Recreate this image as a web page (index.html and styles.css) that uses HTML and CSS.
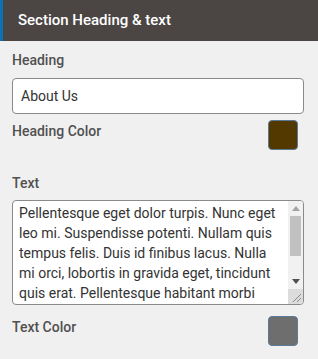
FILE: index.html
```html
<!DOCTYPE html>
<html lang="en">
<head>
  <meta charset="UTF-8" />
  <meta name="viewport" content="width=device-width, initial-scale=1.0" />
  <title>Section Heading &amp; text</title>
  <link rel="stylesheet" href="styles.css">
</head>
<body>
  <div class="panel">
    <div class="panel-header">Section Heading &amp; text</div>

    <div class="panel-body">
      <label class="field-label" for="heading">Heading</label>
      <input id="heading" class="text-input" type="text" value="About Us">

      <div class="color-row">
        <span class="field-label">Heading Color</span>
        <span class="swatch heading-swatch"></span>
      </div>

      <label class="field-label text-label" for="body-text">Text</label>
      <div class="text-wrap">
        <textarea id="body-text" class="text-area">Pellentesque eget dolor turpis. Nunc eget leo mi. Suspendisse potenti. Nullam quis tempus felis. Duis id finibus lacus. Nulla mi orci, lobortis in gravida eget, tincidunt quis erat. Pellentesque habitant morbi tristique senectus et netus et malesuada fames ac turpis egestas. Vivamus a nisl sed arcu blandit rhoncus.</textarea>
        <!-- drawn scrollbar, the native one is hidden in the screenshot -->
        <div class="scrollbar">
          <span class="sb-arrow">
            <svg width="8" height="5" viewBox="0 0 8 5"><path d="M0 5 L4 0 L8 5 Z" fill="#a3a3a3"/></svg>
          </span>
          <span class="sb-track"><span class="sb-thumb"></span></span>
          <span class="sb-arrow">
            <svg width="8" height="5" viewBox="0 0 8 5"><path d="M0 0 L8 0 L4 5 Z" fill="#505050"/></svg>
          </span>
        </div>
        <div class="sb-corner">
          <svg width="15" height="15" viewBox="0 0 15 15">
            <path d="M5 13 L13 5 M9 13 L13 9" stroke="#8a8a8a" stroke-width="1"/>
          </svg>
        </div>
      </div>

      <div class="color-row text-color-row">
        <span class="field-label">Text Color</span>
        <span class="swatch text-swatch"></span>
      </div>
    </div>
  </div>
</body>
</html>
```

FILE: styles.css
```css
html, body {
  margin: 0;
  height: 100%;
  background: #f0f0f0;
  font-family: Roboto, "Liberation Sans", sans-serif;
  overflow: hidden;
}
.panel {
  width: 318px;
}
.panel-header {
  height: 41px;
  line-height: 41px;
  background: #4b4644;
  color: #fff;
  font-size: 15px;
  font-weight: 500;
  padding-left: 15px;
  border-left: 3px solid #0a72b5;
  box-sizing: border-box;
}
.panel-body {
  display: flex;
  flex-direction: column;
  padding: 9px 14px 0 12px;
}
.field-label {
  font-size: 14px;
  font-weight: 500;
  color: #505050;
  line-height: 20px;
}
.text-input {
  margin-top: 8px;
  height: 36px;
  box-sizing: border-box;
  border: 1px solid #8a8a8a;
  border-radius: 4px;
  background: #fff;
  padding: 0 8px;
  font-family: inherit;
  font-size: 14px;
  color: #333;
  outline: none;
}
.color-row {
  display: flex;
  justify-content: space-between;
  align-items: flex-start;
  padding-top: 6px;
  padding-right: 6px;
}
.color-row .field-label {
  padding-top: 1px;
}
.text-color-row {
  padding-top: 11px;
}
.swatch {
  width: 30px;
  height: 30px;
  box-sizing: border-box;
  border: 1px solid #5a7898;
  border-radius: 4px;
}
.heading-swatch {
  background: #533800;
}
.text-swatch {
  background: #6e6e6e;
}
.text-label {
  margin-top: 23px;
}
.text-wrap {
  position: relative;
  margin-top: 7px;
  height: 105px;
}
.text-area {
  display: block;
  width: 100%;
  height: 105px;
  box-sizing: border-box;
  border: 1px solid #8a8a8a;
  border-radius: 4px;
  background: #fff;
  padding: 2px 22px 2px 6px;
  font-family: inherit;
  font-size: 14px;
  line-height: 20px;
  color: #333;
  resize: none;
  outline: none;
  overflow: hidden;
  scrollbar-width: none;
}
.scrollbar {
  position: absolute;
  top: 1px;
  right: 1px;
  bottom: 16px;
  width: 15px;
  display: flex;
  flex-direction: column;
  background: #f1f1f1;
  border-top-right-radius: 3px;
}
.sb-arrow {
  height: 15px;
  display: flex;
  align-items: center;
  justify-content: center;
}
.sb-track {
  flex: 1;
  padding: 0 2px;
}
.sb-thumb {
  display: block;
  height: 40px;
  background: #c1c1c1;
}
.sb-corner {
  position: absolute;
  right: 1px;
  bottom: 1px;
  width: 15px;
  height: 15px;
  background: #dcdcdc;
  border-bottom-right-radius: 3px;
}
.sb-corner svg {
  display: block;
}
```
